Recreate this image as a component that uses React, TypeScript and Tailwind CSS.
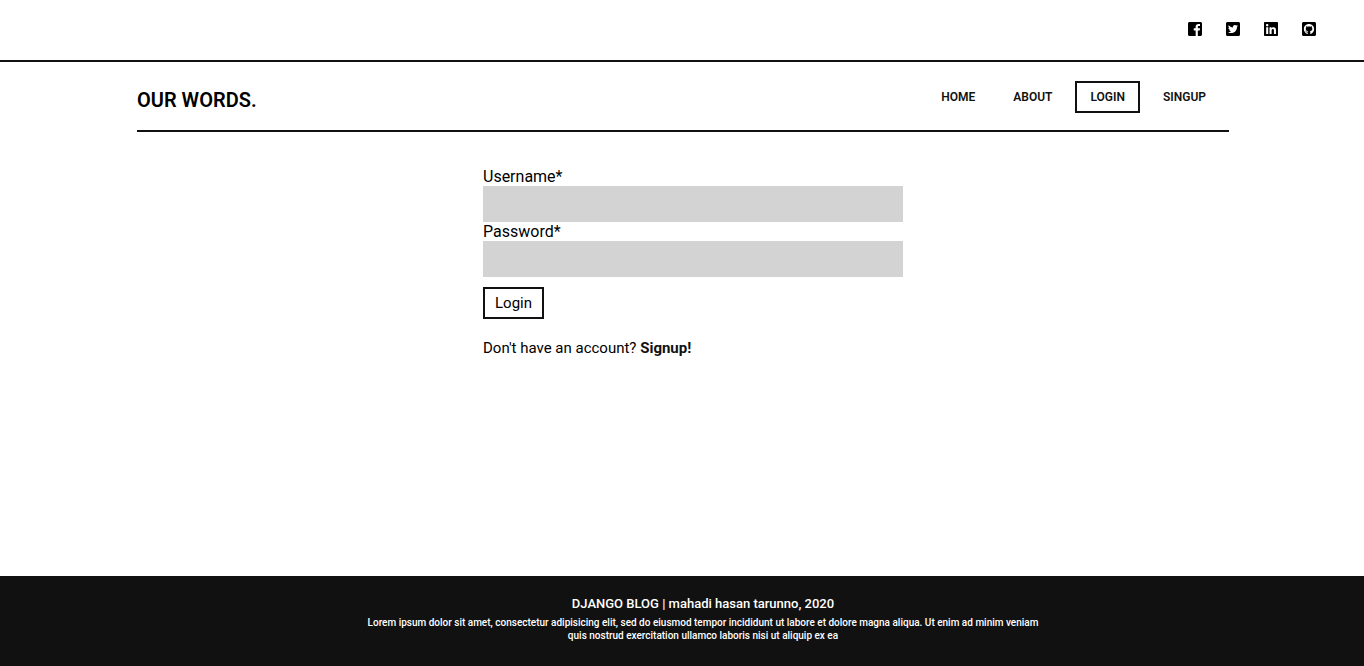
import { FaTwitterSquare, FaLinkedin, FaGithubSquare } from "react-icons/fa";

function FacebookSquare({ className }: { className?: string }) {
  return (
    <svg viewBox="0 0 448 512" fill="currentColor" className={className} aria-hidden="true">
      <path d="M448 80v352c0 26.5-21.5 48-48 48h-85.3V302.8h60.6l8.7-67.6h-69.3V192c0-19.6 5.4-32.9 33.5-32.9H384V98.7c-6.2-.8-27.4-2.7-52.2-2.7-51.6 0-87 31.5-87 89.4v49.9H184v67.6h60.9V480H48c-26.5 0-48-21.5-48-48V80c0-26.5 21.5-48 48-48h352c26.5 0 48 21.5 48 48z" />
    </svg>
  );
}

const socials = [
  { label: "Facebook", Icon: FacebookSquare },
  { label: "Twitter", Icon: FaTwitterSquare },
  { label: "LinkedIn", Icon: FaLinkedin },
  { label: "GitHub", Icon: FaGithubSquare },
];

const links = ["HOME", "ABOUT", "LOGIN", "SINGUP"];

function Field({ id, label, type }: { id: string; label: string; type: string }) {
  return (
    <div>
      <label htmlFor={id} className="block leading-[19px]">{label}</label>
      <input id={id} type={type} className="block h-9 w-full bg-[#d3d3d3] px-2 outline-none" />
    </div>
  );
}

export default function App() {
  return (
    <div className="flex min-h-screen flex-col bg-white font-['Roboto',sans-serif] text-base text-black">
      <div className="flex h-[62px] items-center justify-end gap-6 border-b-2 border-[#111] pr-12 pb-0.5">
        {socials.map(({ label, Icon }) => (
          <a key={label} href="#" aria-label={label}>
            <Icon className="h-4 w-[14px]" />
          </a>
        ))}
      </div>
      <div className="pl-0.5">
        <header className="mx-auto flex h-[70px] w-full max-w-[1092px] items-center justify-between border-b-2 border-[#111]">
          <a href="#" className="pt-2 text-xl font-semibold">OUR WORDS.</a>
          <nav className="flex gap-2 pt-0.5 pr-2 text-xs font-semibold text-[#111]">
            {links.map((link) => (
              <a
                key={link}
                href="#"
                className={`flex h-8 items-center border-2 px-[13px] ${link === "LOGIN" ? "border-[#111]" : "border-transparent"}`}
              >
                {link}
              </a>
            ))}
          </nav>
        </header>
      </div>
      <main className="flex flex-1 justify-center pt-[35px] pl-[22px]">
        <div className="w-full max-w-[420px]">
          <form onSubmit={(e) => e.preventDefault()}>
            <Field id="username" label="Username*" type="text" />
            <Field id="password" label="Password*" type="password" />
            <button type="submit" className="mt-[10px] h-8 border-2 border-[#111] px-[10px] text-[15px]">Login</button>
          </form>
          <p className="mt-5 text-[15px] leading-[18px]">
            Don't have an account? <a href="#" className="font-bold text-[#111]">Signup!</a>
          </p>
        </div>
      </main>
      <footer className="bg-[#111] pt-5 pb-6 pl-[42px] text-center font-medium text-white">
        <p className="text-[13px] leading-4">DJANGO BLOG | mahadi hasan tarunno, 2020</p>
        <p className="mx-auto mt-1 max-w-[680px] text-[10px] leading-[13px]">
          Lorem ipsum dolor sit amet, consectetur adipisicing elit, sed do eiusmod tempor incididunt ut labore et dolore magna aliqua. Ut enim ad minim veniam quis nostrud exercitation ullamco laboris nisi ut aliquip ex ea
        </p>
      </footer>
    </div>
  );
}
